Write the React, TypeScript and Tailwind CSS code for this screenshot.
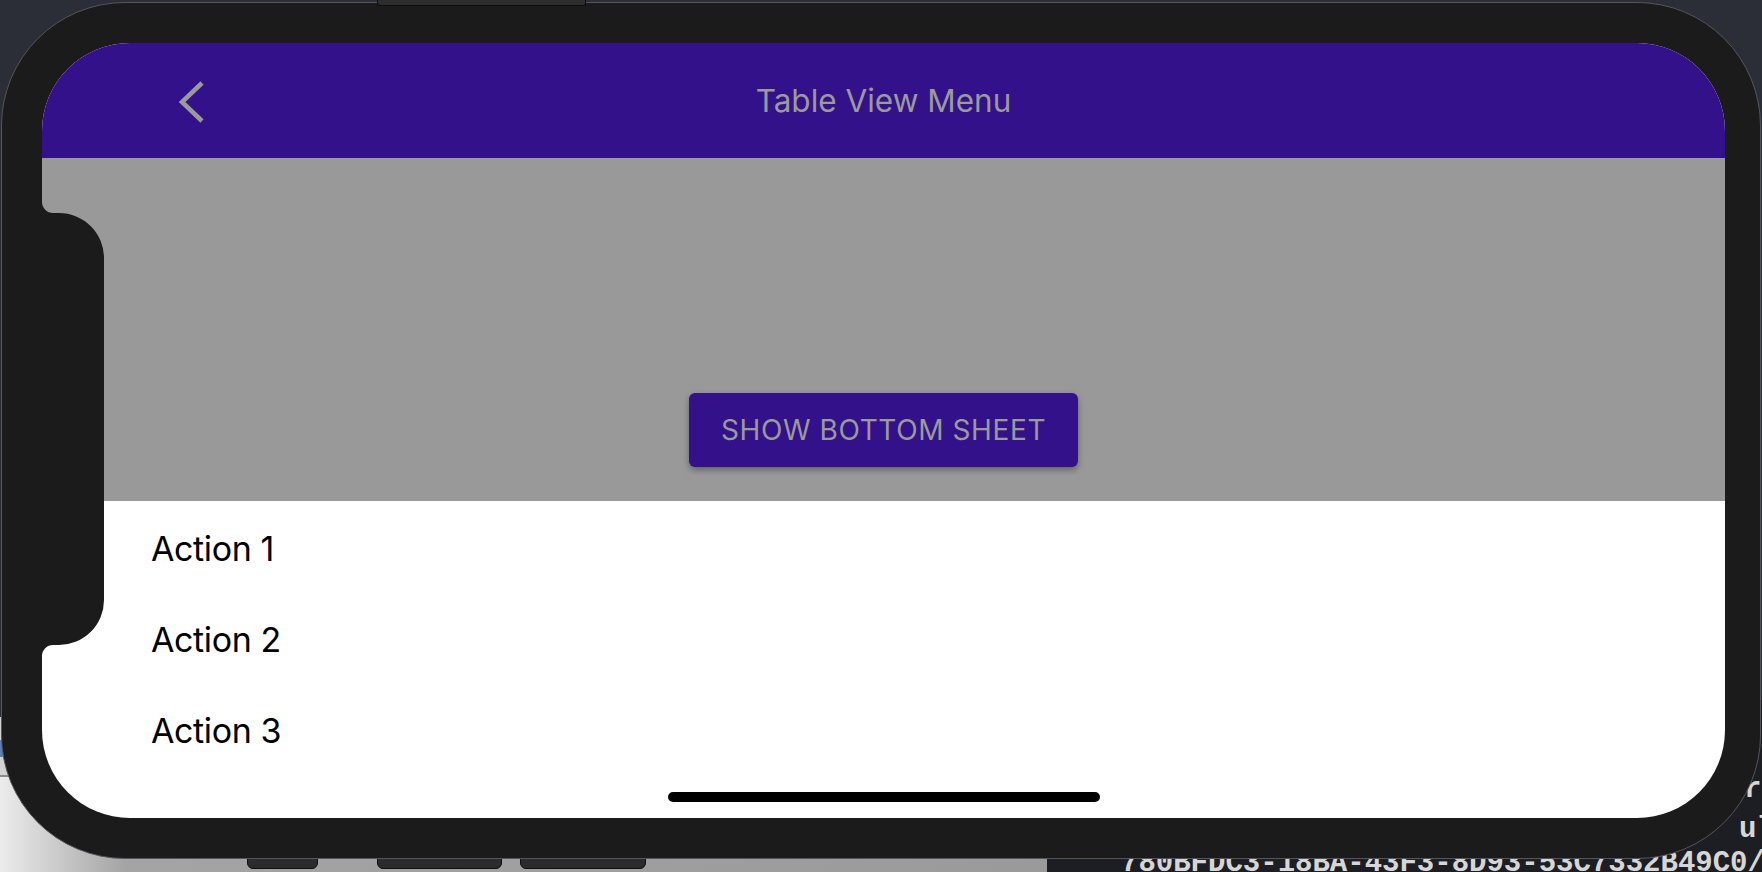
import React from "react";

function Chevron() {
  return (
    <svg width="28" height="44" viewBox="0 0 28 44" fill="none">
      <path d="M25 3 L5 22 L25 41" stroke="#9a9a9a" strokeWidth="4.5" strokeLinecap="butt" strokeLinejoin="miter" />
    </svg>
  );
}

function Notch() {
  return (
    <svg
      className="absolute left-0 top-[157px]"
      width="64"
      height="470"
      viewBox="0 0 64 470"
    >
      <path
        d="M0 2 A11 11 0 0 0 11 13 L17 13 A45 45 0 0 1 62 58 L62 400 A45 45 0 0 1 17 445 L11 445 A11 11 0 0 0 0 456 Z"
        fill="#1b1b1b"
      />
    </svg>
  );
}

export default function App() {
  const actions = ["Action 1", "Action 2", "Action 3"];
  return (
    <div className="relative flex w-[1762px] h-[872px] overflow-hidden bg-[#2b2e36] pt-[2px] pl-[1px] font-['Inter',sans-serif]">
      {/* desktop background windows */}
      <div className="absolute left-0 top-[717px] w-[1047px] h-[60px] flex flex-col">
        <div className="h-[23px] bg-[#d2d2d2]" />
        <div className="h-[17px] bg-[#5b81b8]" />
        <div className="h-[18px] bg-[#d2d2d2]" />
        <div className="h-[2px] bg-[#8a8a8a]" />
      </div>
      <div className="absolute left-0 top-[777px] w-[1047px] h-[95px] bg-gradient-to-r from-[#ececec] via-[#a4a4a4] via-[12%] to-[#9a9a9a]" />
      <div className="absolute left-[1047px] top-[700px] right-0 bottom-0 bg-[#1d1e23] font-['Liberation_Mono',monospace] font-bold text-[29px] leading-[29px] text-[#d6d6d6]">
        <span className="absolute left-[697px] top-[75px]">r</span>
        <span className="absolute left-[692px] top-[115px]">ula</span>
        <span className="absolute left-[74px] top-[149px] whitespace-pre">780BFDC3-18BA-43F3-8D93-53C7332B49C0/</span>
      </div>

      {/* hardware buttons behind the frame */}
      <div className="absolute left-[247px] top-[850px] w-[71px] h-[19px] rounded-b-[6px] bg-[#2b2b2b] border border-[#0f0f0f]" />
      <div className="absolute left-[377px] top-[850px] w-[125px] h-[19px] rounded-b-[6px] bg-[#2b2b2b] border border-[#0f0f0f]" />
      <div className="absolute left-[520px] top-[850px] w-[126px] h-[19px] rounded-b-[6px] bg-[#2b2b2b] border border-[#0f0f0f]" />

      {/* device */}
      <div className="relative z-10 flex w-[1760px] h-[857px] shrink-0 rounded-[124px] border border-[#55565c] bg-[#1b1b1b] pl-[40px] pr-[35px] pt-[40px] pb-[40px]">
        <div className="relative flex flex-1 flex-col overflow-hidden rounded-[88px] bg-white">
          {/* app bar */}
          <div className="grid h-[115px] grid-cols-[1fr_auto_1fr] items-center bg-[#33118a]">
            <div className="pl-[135px] pt-[2px]">
              <Chevron />
            </div>
            <div className="text-[31.5px] text-[#9a9a9a] pt-[1px]">Table View Menu</div>
            <div />
          </div>
          {/* dimmed page */}
          <div className="flex h-[343px] justify-center bg-[#999999] pt-[235px]">
            <div className="flex h-[74px] w-[389px] items-center justify-center rounded-[6px] bg-[#33118a] text-[28px] tracking-[0.6px] text-[#9a9a9a] shadow-[0_3px_6px_rgba(0,0,0,0.35)]">
              SHOW BOTTOM SHEET
            </div>
          </div>
          {/* bottom sheet */}
          <div className="flex flex-1 flex-col pt-[2px]">
            {actions.map((a) => (
              <div key={a} className="flex h-[91px] items-center pl-[109px] text-[34px] tracking-[-0.4px] text-black">
                {a}
              </div>
            ))}
          </div>
          {/* home indicator */}
          <div className="absolute bottom-[16px] left-1/2 h-[10px] w-[432px] -translate-x-1/2 rounded-full bg-black" />
          <Notch />
        </div>
      </div>

      {/* top hardware button */}
      <div className="absolute left-[377px] top-0 z-20 w-[209px] h-[6px] rounded-b-[3px] bg-[#2d2d2d] border-x border-b border-[#0e0e0e]" />
    </div>
  );
}
